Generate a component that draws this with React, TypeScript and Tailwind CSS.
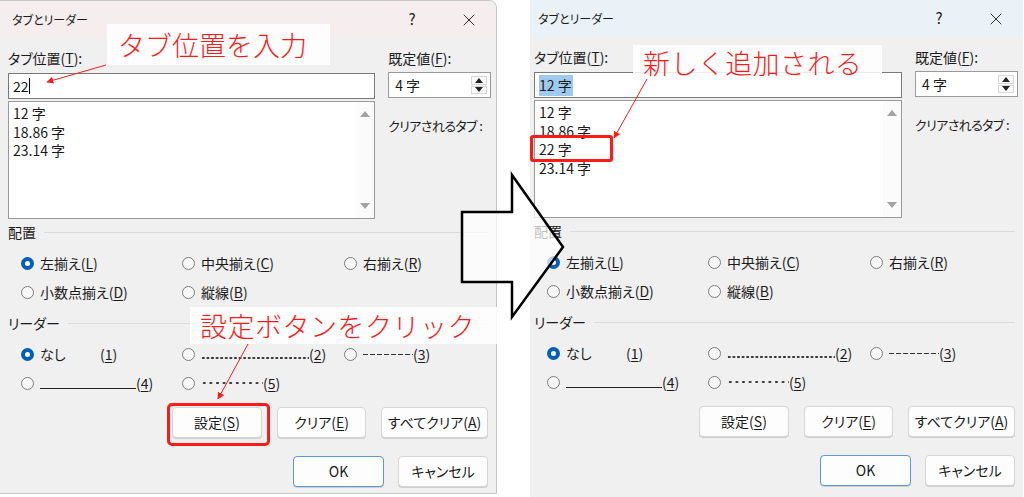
import { X } from "lucide-react";

const ui = "font-['Noto_Sans_CJK_JP','Noto_Sans',sans-serif] [font-feature-settings:'palt'] text-[#1b1b1b]";
const note = "font-['Noto_Sans_CJK_JP','Noto_Sans',sans-serif] font-light text-[27px] leading-none text-[#ff1a1a]";

function Radio({ checked }: { checked?: boolean }) {
    if (checked) {
        return (
            <span className="w-[13px] h-[13px] rounded-full bg-[#005fb8] flex items-center justify-center shrink-0">
                <span className="w-[5px] h-[5px] rounded-full bg-white" />
            </span>
        );
    }
    return <span className="w-[13px] h-[13px] rounded-full border-[1.5px] border-[#7c7c7c] bg-[#f7f7f7] shrink-0" />;
}

function Key({ k }: { k: string }) {
    return <u className="underline-offset-2">{k}</u>;
}

function Section({ label }: { label: string }) {
    return (
        <div className="h-[20px] flex items-center text-[14px]">
            <span>{label}</span>
            <span className="flex-1 h-px bg-[#dcdcdc] ml-[8px] mr-[3px]" />
        </div>
    );
}

function Btn({ children, primary, w }: { children: React.ReactNode; primary?: boolean; w: string }) {
    return (
        <div
            className={`${w} h-[31px] rounded-[4px] bg-[#fdfdfd] flex items-center justify-center text-[14px] shadow-[0_1px_0_#cfcfcf] ${
                primary ? "border-[1.5px] border-[#5c97d8]" : "border border-[#d6d6d6]"
            }`}
        >
            {children}
        </div>
    );
}

function Dialog({ right }: { right?: boolean }) {
    const items = right ? ["12 字", "18.86 字", "22 字", "23.14 字"] : ["12 字", "18.86 字", "23.14 字"];
    return (
        <div
            className={`${ui} w-[497px] bg-[#f0f0f0] flex flex-col ${
                right ? "h-[497px]" : "h-[494px] border-t border-r border-b border-[#c6c6c6] rounded-tr-[8px] overflow-hidden"
            }`}
        >
            {/* title bar */}
            <div className={`flex items-center pl-[12px] pr-[4px] ${right ? "h-[37px] bg-[#eaf2f8]" : "h-[37px] bg-[#f6eeee]"}`}>
                <span className="text-[12px]">タブとリーダー</span>
                <span className="ml-auto w-[46px] text-center text-[15px]">?</span>
                <span className="ml-[11px] w-[46px] flex justify-center">
                    <X size={20} strokeWidth={1.1} />
                </span>
            </div>

            <div className="flex flex-col pl-[8px] pr-[5px]">
                <div className="flex gap-[13px] pt-[10px]">
                    <div className="w-[368px] flex flex-col">
                        <div className="h-[20px] leading-[20px] text-[14px]">
                            タブ位置(<Key k="T" />):
                        </div>
                        <div className="mt-[5px] h-[26px] border border-[#7a7a7a] bg-white pl-[4px] flex items-center text-[14px]">
                            {right ? (
                                <span className="bg-[#9fcaf0] pr-[1px]">12 字</span>
                            ) : (
                                <>
                                    <span>22</span>
                                    <span className="w-px h-[16px] bg-black" />
                                </>
                            )}
                        </div>
                        <div className="mt-[2px] h-[118px] border border-[#9a9a9a] bg-white flex">
                            <div className="flex-1 pl-[4px] pt-[2px] text-[14px] leading-[18.7px]">
                                {items.map((t) => (
                                    <div key={t}>{t}</div>
                                ))}
                            </div>
                            <div className="w-[18px] flex flex-col items-center justify-between py-[9px] bg-[#fbfbfb]">
                                <span className="w-0 h-0 border-l-[5px] border-r-[5px] border-b-[6px] border-l-transparent border-r-transparent border-b-[#a3a3a3]" />
                                <span className="w-0 h-0 border-l-[5px] border-r-[5px] border-t-[6px] border-l-transparent border-r-transparent border-t-[#a3a3a3]" />
                            </div>
                        </div>
                    </div>

                    <div className="w-[103px] flex flex-col">
                        <div className="h-[20px] leading-[20px] text-[14px]">
                            既定値(<Key k="F" />):
                        </div>
                        <div className="mt-[4px] h-[26px] border border-[#9a9a9a] bg-white flex">
                            <div className="flex-1 pl-[6px] flex items-center text-[14px]">4 字</div>
                            <div className="w-[19px] flex flex-col gap-[1px] py-[3px] pr-[3px]">
                                <div className="flex-1 border border-[#d8d8d8] bg-[#fafafa] flex items-center justify-center">
                                    <span className="w-0 h-0 border-l-[4px] border-r-[4px] border-b-[5px] border-l-transparent border-r-transparent border-b-[#222]" />
                                </div>
                                <div className="flex-1 border border-[#d8d8d8] bg-[#fafafa] flex items-center justify-center">
                                    <span className="w-0 h-0 border-l-[4px] border-r-[4px] border-t-[5px] border-l-transparent border-r-transparent border-t-[#222]" />
                                </div>
                            </div>
                        </div>
                        <div className="mt-[18px] h-[20px] leading-[20px] text-[13px] tracking-[-0.6px] whitespace-nowrap">
                            クリアされるタブ :
                        </div>
                    </div>
                </div>

                <div className="mt-[3px]">
                    <Section label="配置" />
                </div>
                <div className="mt-[11px] pl-[13px] grid grid-cols-[161px_162px_1fr] gap-y-[9px] text-[14px]">
                    <div className="h-[20px] flex items-center gap-[6px]">
                        <Radio checked />
                        <span>
                            左揃え(<Key k="L" />)
                        </span>
                    </div>
                    <div className="h-[20px] flex items-center gap-[6px]">
                        <Radio />
                        <span>
                            中央揃え(<Key k="C" />)
                        </span>
                    </div>
                    <div className="h-[20px] flex items-center gap-[6px]">
                        <Radio />
                        <span>
                            右揃え(<Key k="R" />)
                        </span>
                    </div>
                    <div className="h-[20px] flex items-center gap-[6px]">
                        <Radio />
                        <span>
                            小数点揃え(<Key k="D" />)
                        </span>
                    </div>
                    <div className="h-[20px] flex items-center gap-[6px]">
                        <Radio />
                        <span>
                            縦線(<Key k="B" />)
                        </span>
                    </div>
                </div>

                <div className="mt-[11px]">
                    <Section label="リーダー" />
                </div>
                <div className="mt-[11px] pl-[13px] grid grid-cols-[161px_162px_1fr] gap-y-[9px] text-[14px]">
                    <div className="h-[20px] flex items-center gap-[6px]">
                        <Radio checked />
                        <span className="w-[54px]">なし</span>
                        <span>
                            (<Key k="1" />)
                        </span>
                    </div>
                    <div className="h-[20px] flex items-center gap-[6px]">
                        <Radio />
                        <span className="flex items-baseline">
                            <span className="inline-block w-[108px] h-[4px] bg-[radial-gradient(circle,#333_1px,transparent_1.4px)] bg-[length:4.6px_4px] bg-repeat-x" />
                            <span>
                                (<Key k="2" />)
                            </span>
                        </span>
                    </div>
                    <div className="h-[20px] flex items-center gap-[6px]">
                        <Radio />
                        <span className="flex items-center">
                            <span className="inline-block w-[50px] h-[1.5px] mt-[1px] bg-[repeating-linear-gradient(90deg,#333_0_5px,transparent_5px_7px)]" />
                            <span>
                                (<Key k="3" />)
                            </span>
                        </span>
                    </div>
                    <div className="h-[20px] flex items-center gap-[6px]">
                        <Radio />
                        <span className="flex items-baseline">
                            <span className="inline-block w-[96px] h-[12px] border-b border-[#222]" />
                            <span>
                                (<Key k="4" />)
                            </span>
                        </span>
                    </div>
                    <div className="h-[20px] flex items-center gap-[6px]">
                        <Radio />
                        <span className="flex items-center">
                            <span className="inline-block w-[62px] h-[4px] bg-[radial-gradient(circle,#333_1px,transparent_1.4px)] bg-[length:6.6px_4px] bg-repeat-x" />
                            <span>
                                (<Key k="5" />)
                            </span>
                        </span>
                    </div>
                </div>

                <div className="mt-[14px] pr-[3px] flex justify-end gap-[15px]">
                    <Btn w="w-[90px]">
                        設定(<Key k="S" />)
                    </Btn>
                    <Btn w="w-[89px]">
                        クリア(<Key k="E" />)
                    </Btn>
                    <Btn w="w-[107px]">
                        すべてクリア(<Key k="A" />)
                    </Btn>
                </div>
                <div className="mt-[18px] pr-[3px] flex justify-end gap-[14px]">
                    <Btn w="w-[91px]" primary>
                        OK
                    </Btn>
                    <Btn w="w-[90px]">キャンセル</Btn>
                </div>
            </div>
        </div>
    );
}

export default function App() {
    return (
        <div className="relative w-[1024px] h-[497px] bg-white overflow-hidden flex">
            <Dialog />
            <div className="ml-[33px] w-[494px] h-[497px] overflow-hidden">
                <div className="-ml-[4px]">
                    <Dialog right />
                </div>
            </div>

            {/* callouts */}
            <div className={`${note} absolute left-[107px] top-[24px] w-[223px] h-[41px] bg-white/85 pl-[11px] flex items-center`}>
                タブ位置を入力
            </div>
            <div className={`${note} absolute left-[190px] top-[307px] w-[307px] h-[37px] bg-white/85 pl-[10px] flex items-center tracking-[0.5px]`}>
                設定ボタンをクリック
            </div>
            <div className={`${note} absolute left-[633px] top-[45px] w-[249px] h-[34px] bg-white/85 pl-[10px] flex items-center tracking-[0.4px]`}>
                新しく追加される
            </div>

            {/* red highlight boxes */}
            <div className="absolute left-[167px] top-[403px] w-[103px] h-[43px] border-[3px] border-[#ff1a1a] rounded-[5px]" />
            <div className="absolute left-[530px] top-[135px] w-[83px] h-[27px] border-[3px] border-[#ff1a1a] rounded-[3px]" />

            {/* pointer lines and big arrow */}
            <svg className="absolute left-0 top-0 pointer-events-none" width="1024" height="497" viewBox="0 0 1024 497">
                <defs>
                    <marker id="head" viewBox="0 0 10 10" refX="9" refY="5" markerWidth="7" markerHeight="7" orient="auto">
                        <path d="M0 0 L10 5 L0 10 Z" fill="#ff1a1a" />
                    </marker>
                </defs>
                <line x1="106" y1="65" x2="47" y2="82" stroke="#ff1a1a" strokeWidth="1" markerEnd="url(#head)" />
                <line x1="248" y1="344" x2="218" y2="399" stroke="#ff1a1a" strokeWidth="1" markerEnd="url(#head)" />
                <line x1="647" y1="79" x2="614" y2="138" stroke="#ff1a1a" strokeWidth="1" markerEnd="url(#head)" />
                <polygon
                    points="462,212 512,212 512,175 563,247 512,317 512,282 462,282"
                    fill="white"
                    fillOpacity="0.72"
                    stroke="#000"
                    strokeWidth="2.5"
                    strokeLinejoin="miter"
                />
            </svg>
        </div>
    );
}
